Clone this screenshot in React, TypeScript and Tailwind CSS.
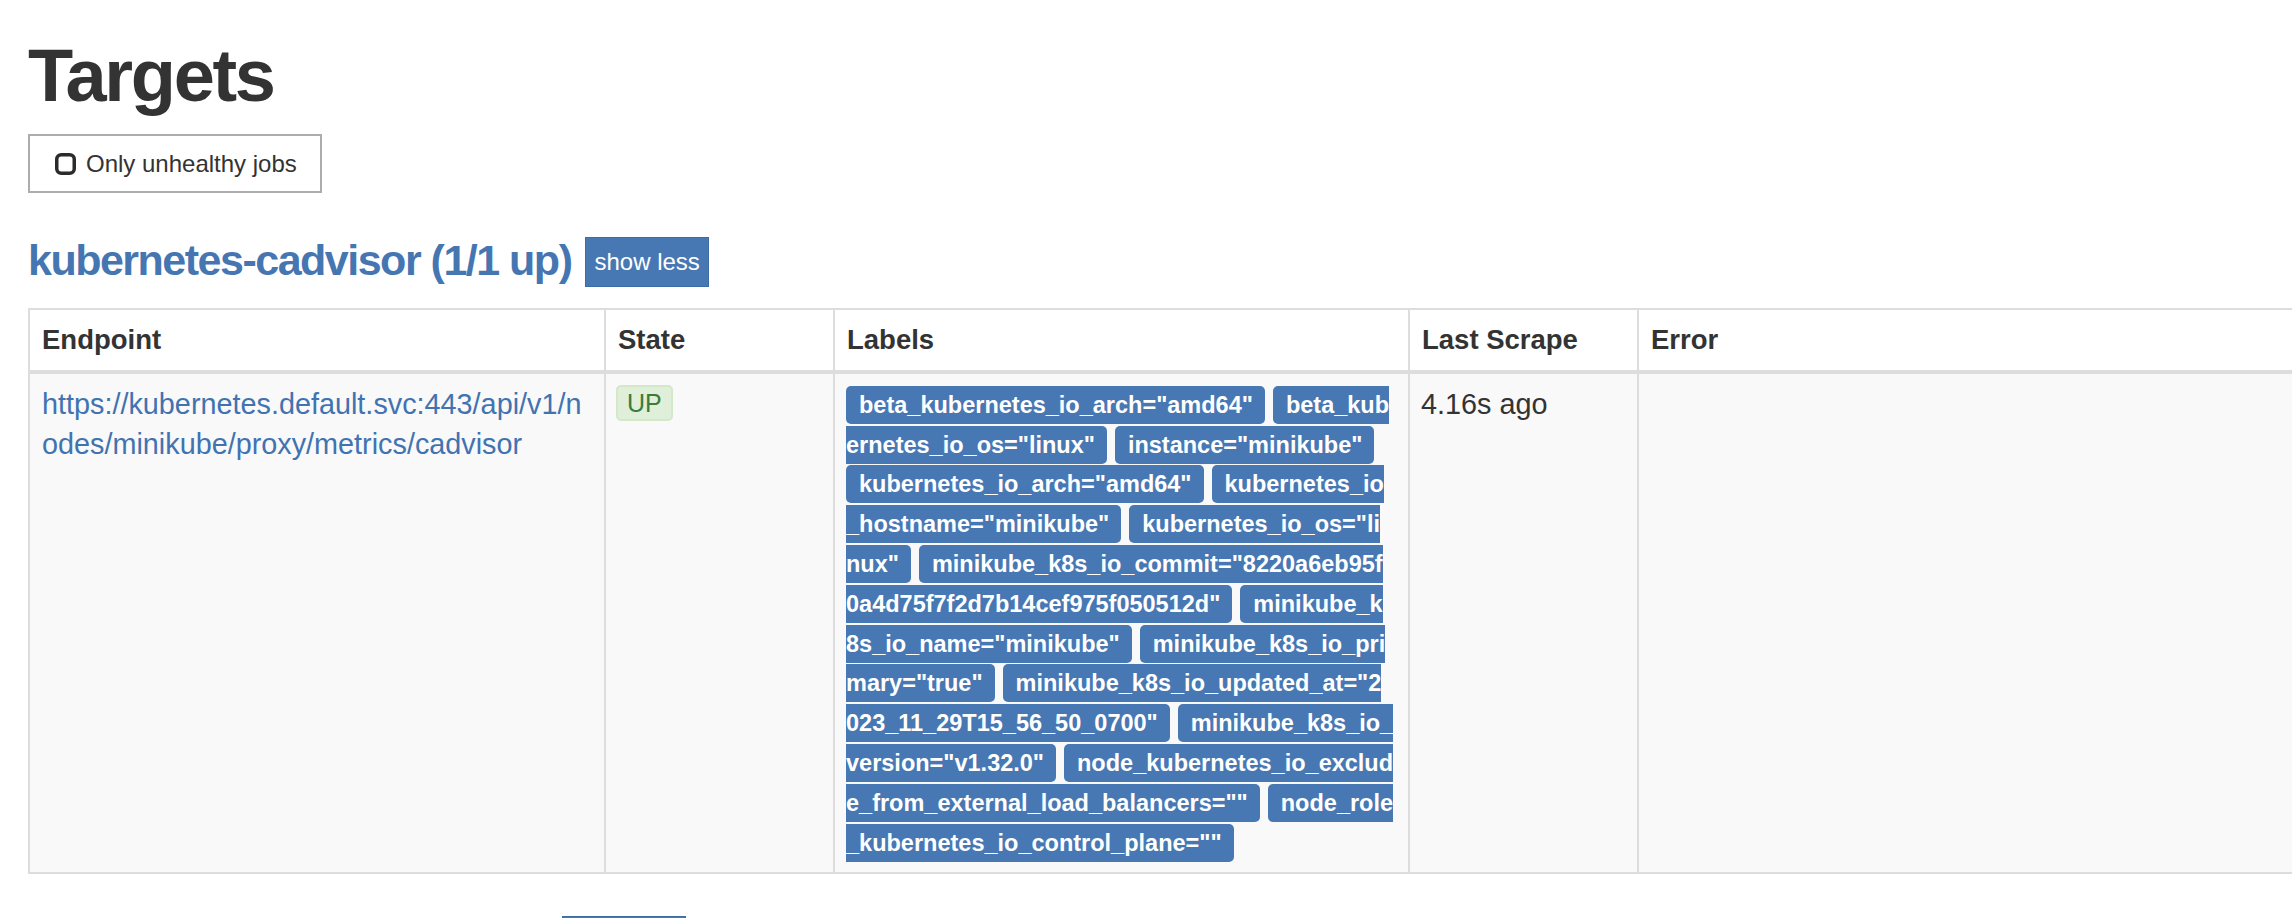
import React from "react";

type Frag = { t: string; s: boolean; e: boolean };

const lines: Frag[][] = [
  [
    { t: 'beta_kubernetes_io_arch="amd64"', s: true, e: true },
    { t: "beta_kub", s: true, e: false },
  ],
  [
    { t: 'ernetes_io_os="linux"', s: false, e: true },
    { t: 'instance="minikube"', s: true, e: true },
  ],
  [
    { t: 'kubernetes_io_arch="amd64"', s: true, e: true },
    { t: "kubernetes_io", s: true, e: false },
  ],
  [
    { t: '_hostname="minikube"', s: false, e: true },
    { t: 'kubernetes_io_os="li', s: true, e: false },
  ],
  [
    { t: 'nux"', s: false, e: true },
    { t: 'minikube_k8s_io_commit="8220a6eb95f', s: true, e: false },
  ],
  [
    { t: '0a4d75f7f2d7b14cef975f050512d"', s: false, e: true },
    { t: "minikube_k", s: true, e: false },
  ],
  [
    { t: '8s_io_name="minikube"', s: false, e: true },
    { t: "minikube_k8s_io_pri", s: true, e: false },
  ],
  [
    { t: 'mary="true"', s: false, e: true },
    { t: 'minikube_k8s_io_updated_at="2', s: true, e: false },
  ],
  [
    { t: '023_11_29T15_56_50_0700"', s: false, e: true },
    { t: "minikube_k8s_io_", s: true, e: false },
  ],
  [
    { t: 'version="v1.32.0"', s: false, e: true },
    { t: "node_kubernetes_io_exclud", s: true, e: false },
  ],
  [
    { t: 'e_from_external_load_balancers=""', s: false, e: true },
    { t: "node_role", s: true, e: false },
  ],
  [{ t: '_kubernetes_io_control_plane=""', s: false, e: true }],
];

function Fragment({ f }: { f: Frag }) {
  const cls = [
    "inline-flex h-[38px] items-center bg-[#4778b4] text-white font-bold text-[23.5px] leading-[38px] whitespace-pre",
    f.s ? "pl-[13px] rounded-l-[5px]" : "pl-0",
    f.e ? "pr-[12px] rounded-r-[5px]" : "pr-0",
  ].join(" ");
  return <span className={cls}>{f.t}</span>;
}

function CheckSquare() {
  return (
    <svg width="21" height="22" viewBox="0 0 21 22" className="shrink-0">
      <rect x="1.75" y="1.75" width="17.5" height="18.5" rx="4.5" ry="4.5" fill="none" stroke="#2b2b2b" strokeWidth="3.5" />
    </svg>
  );
}

function JobHeading({ name }: { name: string }) {
  return (
    <div className="flex h-[50px] items-center">
      <h3 className="mb-[4px] text-[43px] font-bold leading-[48px] tracking-[-1.5px] text-[#4676b2]">{name}</h3>
      <button className="ml-[14px] h-[50px] border border-[#3f6ca6] bg-[#4778b4] px-[8px] text-[24px] leading-[36px] text-white">
        show less
      </button>
    </div>
  );
}

export default function App() {
  return (
    <div className="h-screen w-screen overflow-hidden bg-white font-['Liberation_Sans',Arial,sans-serif] text-[#333333]">
      <div className="flex flex-col pl-[28px] pt-[33px]">
        <h1 className="text-[74px] font-bold leading-[86px] tracking-[-2.3px] text-[#333333]">Targets</h1>

        <div className="mt-[15px] flex">
          <button className="flex h-[59px] w-[294px] items-center gap-[10px] border-2 border-[#adadad] bg-white pl-[25px] text-[24px] text-[#333333]">
            <CheckSquare />
            <span>Only unhealthy jobs</span>
          </button>
        </div>

        <div className="mt-[44px]">
          <JobHeading name="kubernetes-cadvisor (1/1 up)" />
        </div>

        <div className="mt-[21px]">
          <table className="w-[2400px] table-fixed border-collapse">
            <colgroup>
              <col className="w-[576px]" />
              <col className="w-[229px]" />
              <col className="w-[575px]" />
              <col className="w-[229px]" />
              <col />
            </colgroup>
            <thead>
              <tr className="h-[63px]">
                {["Endpoint", "State", "Labels", "Last Scrape", "Error"].map((h) => (
                  <th
                    key={h}
                    className="border-x-2 border-t-2 border-b-4 border-[#dddddd] bg-white px-[12px] text-left align-middle text-[27.5px] font-bold leading-[36px] text-[#333333]"
                  >
                    {h}
                  </th>
                ))}
              </tr>
            </thead>
            <tbody>
              <tr className="bg-[#f9f9f9]">
                <td className="border-2 border-[#dddddd] px-[12px] pt-[11px] pb-[10px] align-top text-[28.8px] leading-[39.8px]">
                  <div className="text-[#4173b1]">
                    <div>https://kubernetes.default.svc:443/api/v1/n</div>
                    <div>odes/minikube/proxy/metrics/cadvisor</div>
                  </div>
                </td>
                <td className="border-2 border-[#dddddd] px-[10px] pt-[11px] pb-[10px] align-top">
                  <span className="inline-flex h-[36px] items-center rounded-[5px] border-2 border-[#d3e8c8] bg-[#e0efd9] px-[9px] text-[25px] leading-[32px] text-[#3e7a3a]">
                    UP
                  </span>
                </td>
                <td className="border-2 border-[#dddddd] pl-[11px] pr-[12px] pt-[11px] pb-[9px] align-top">
                  <div className="flex flex-col">
                    {lines.map((line, i) => (
                      <div key={i} className="flex h-[39.8px] items-center gap-[8px]">
                        {line.map((f, j) => (
                          <Fragment key={j} f={f} />
                        ))}
                      </div>
                    ))}
                  </div>
                </td>
                <td className="border-2 border-[#dddddd] px-[11px] pt-[11px] pb-[10px] align-top text-[28.8px] leading-[39.8px] text-[#333333]">
                  4.16s ago
                </td>
                <td className="border-2 border-[#dddddd] px-[12px] pt-[11px] align-top"></td>
              </tr>
            </tbody>
          </table>
        </div>

        <div className="mt-[42px]">
          <JobHeading name="kubernetes-pods (10/10 up)" />
        </div>
      </div>
    </div>
  );
}
